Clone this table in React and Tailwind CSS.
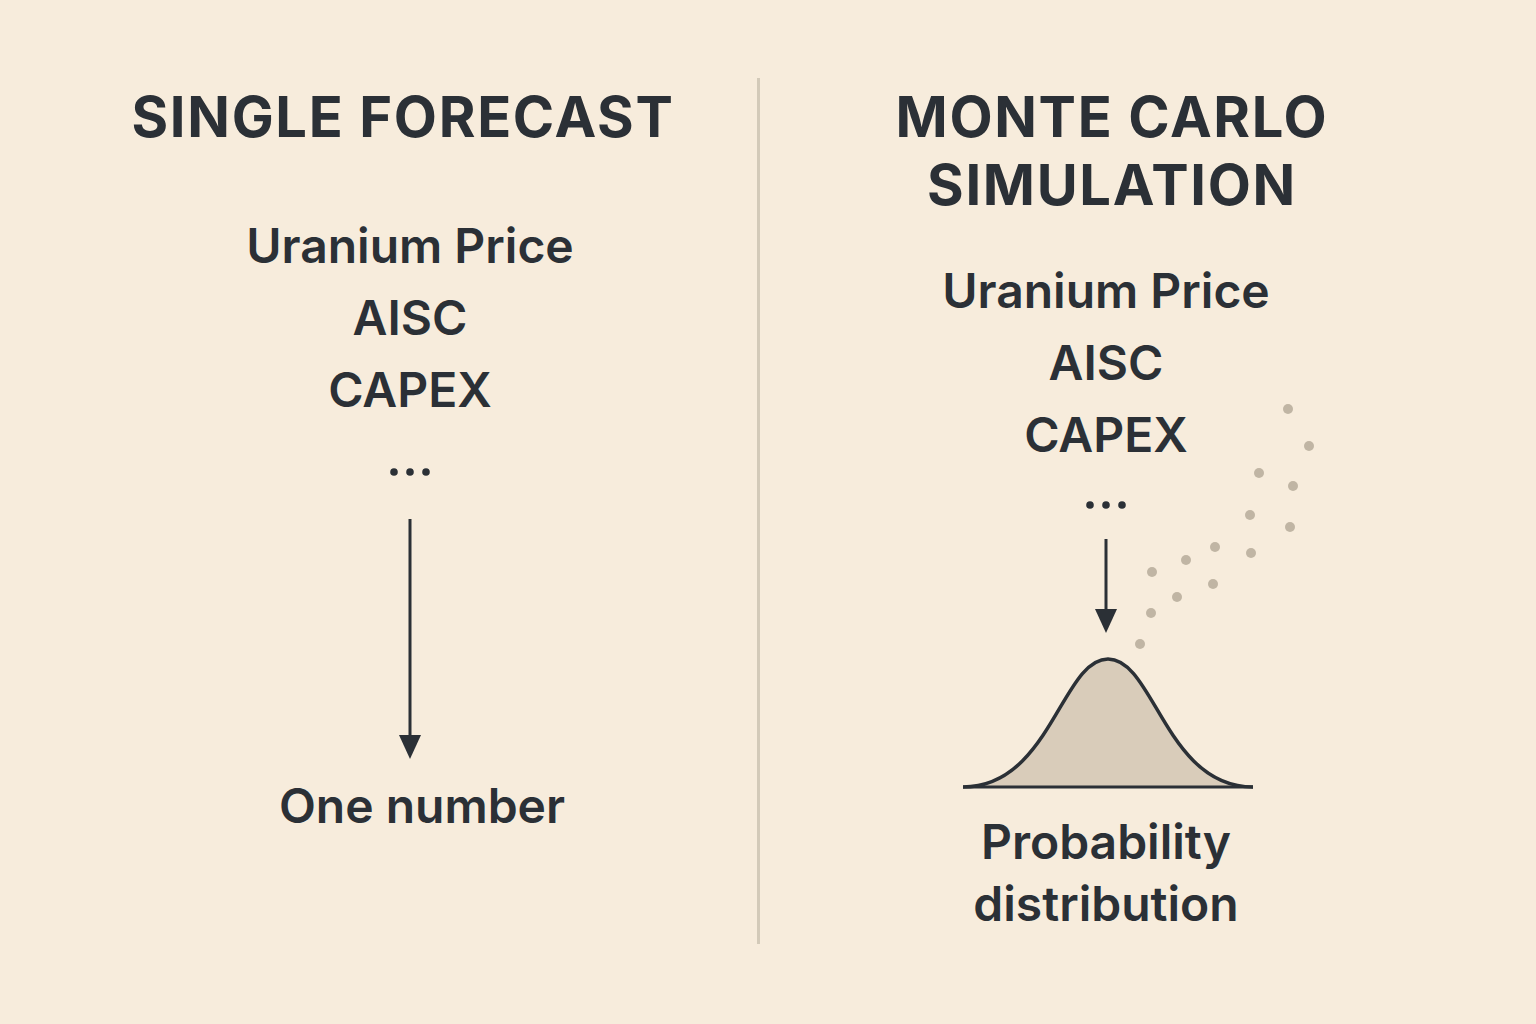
import React from 'react'

const ink = '#2b3036'

// bell curve, svg coords (svg starts at x=960, y=650 on the page)
const bell = 'M3,134 C90,134 102,6 148,6 C194,6 206,134 293,134'

const scatter = [
  [1288, 409], [1309, 446], [1259, 473], [1293, 486], [1250, 515], [1290, 527],
  [1215, 547], [1251, 553], [1186, 560], [1152, 572], [1213, 584], [1177, 597],
  [1151, 613], [1140, 644],
]

const Ellipsis = ({ className }) => (
  <svg className={className} width="40" height="8" viewBox="0 0 40 8">
    <circle cx="4" cy="4" r="3.8" fill={ink} />
    <circle cx="20" cy="4" r="3.8" fill={ink} />
    <circle cx="36" cy="4" r="3.8" fill={ink} />
  </svg>
)

const Arrow = ({ h, className }) => (
  <svg className={className} width="24" height={h} viewBox={`0 0 24 ${h}`}>
    <line x1="12" y1="0" x2="12" y2={h - 20} stroke={ink} strokeWidth="3" />
    <polygon points={`1,${h - 24} 23,${h - 24} 12,${h}`} fill={ink} />
  </svg>
)

export default function App() {
  return (
    <div className="w-[1536px] h-[1024px] bg-[#f7ecdc] flex text-[#2b3036] font-['Inter','Liberation_Sans',sans-serif] overflow-hidden">
      {/* left: single forecast */}
      <div className="w-[757px] shrink-0 flex flex-col items-center pl-[63px] pt-[83px]">
        <h1 className="mr-[14px] text-[56px] leading-[68px] font-bold tracking-[0.03em]">SINGLE FORECAST</h1>
        <div className="mt-[59px] flex flex-col items-center text-[48px] leading-[72px] font-semibold">
          <span>Uranium Price</span>
          <span>AISC</span>
          <span>CAPEX</span>
        </div>
        <Ellipsis className="mt-[42px]" />
        <Arrow h={240} className="mt-[43px]" />
        <p className="mt-[11px] ml-[24px] text-[48px] leading-[72px] font-semibold">One number</p>
      </div>

      <div className="w-[3px] h-[866px] mt-[78px] bg-[#d3cab9] shrink-0" />

      {/* right: monte carlo */}
      <div className="relative flex-1 flex flex-col items-center pr-[84px] pt-[83px]">
        <h1 className="ml-[12px] text-center text-[56px] leading-[68px] font-bold tracking-[0.03em]">
          MONTE CARLO
          <br />
          SIMULATION
        </h1>
        <div className="mt-[36px] flex flex-col items-center text-[48px] leading-[72px] font-semibold">
          <span>Uranium Price</span>
          <span>AISC</span>
          <span>CAPEX</span>
        </div>
        <Ellipsis className="mt-[30px]" />
        <Arrow h={94} className="mt-[30px]" />
        <svg className="mt-[20px] ml-[4px]" width="296" height="138" viewBox="0 0 296 138">
          <path d={`${bell} Z`} fill="#d9ccba" />
          <path d={bell} fill="none" stroke={ink} strokeWidth="3.5" strokeLinejoin="round" />
          <line x1="3" y1="134" x2="293" y2="134" stroke={ink} strokeWidth="3" />
        </svg>
        <p className="mt-[20px] text-center text-[48px] leading-[62px] font-semibold">
          Probability
          <br />
          distribution
        </p>

        <svg className="absolute left-0 top-0 pointer-events-none" width="776" height="1024" viewBox="760 0 776 1024">
          {scatter.map(([x, y], i) => (
            <circle key={i} cx={x} cy={y} r="5" fill="#c0b5a4" />
          ))}
        </svg>
      </div>
    </div>
  )
}
